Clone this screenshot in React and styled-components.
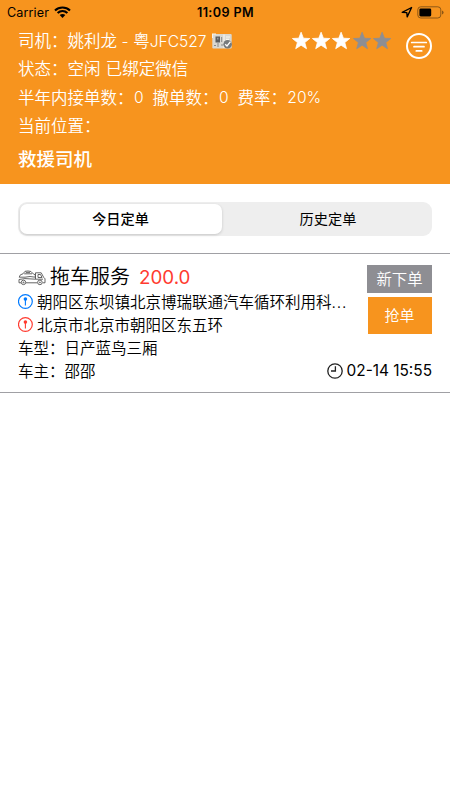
import React from "react";
import styled, { createGlobalStyle } from "styled-components";

const ORANGE = "#f7941e";
const GRAY = "#8e8e93";

const GlobalStyle = createGlobalStyle`
  * { box-sizing: border-box; }
  body { margin: 0; background: #fff; }
  svg { flex: none; }
`;

const Screen = styled.main`
  width: 450px;
  height: 800px;
  overflow: hidden;
  background: #fff;
  color: #000;
  font-family: Inter, "Noto Sans CJK SC", sans-serif;
  white-space: pre;
`;

const Header = styled.header`
  height: 184px;
  background: ${ORANGE};
`;

const StatusBar = styled.div`
  display: grid;
  grid-template-columns: 1fr auto 1fr;
  align-items: center;
  height: 27px;
  padding: 0 6px 3px 7px;
  color: #000;
`;

const Carrier = styled.div`
  display: flex;
  align-items: center;
  gap: 5px;
  font-size: 12.6px;
  letter-spacing: 0.1px;
`;

const Time = styled.div`
  font-size: 12.6px;
  font-weight: 600;
  letter-spacing: 0.4px;
`;

const StatusIcons = styled.div`
  display: flex;
  justify-content: flex-end;
  align-items: center;
  gap: 4px;
`;

const Profile = styled.section`
  display: flex;
  padding: 0 17px 0 18px;
  color: #fff;
`;

const Info = styled.div`
  display: flex;
  flex: 1;
  flex-direction: column;
  min-width: 0;
`;

const InfoLine = styled.div`
  display: flex;
  align-items: center;
  height: 28.3px;
  gap: ${(p) => p.$gap || 0}px;
  font-size: 16.5px;
  font-weight: 350;
  line-height: 28px;
  color: #fff;
`;

const Latin = styled.span`
  font-size: ${(p) => p.$size || 15.6}px;
  font-weight: ${(p) => p.$weight || 350};
  letter-spacing: ${(p) => p.$spacing || 0}px;
  margin-left: ${(p) => p.$indent || 0}px;
`;

const Role = styled.div`
  height: 38px;
  font-size: 18.5px;
  font-weight: 500;
  line-height: 38px;
`;

const Rating = styled.div`
  display: flex;
  flex: none;
  align-items: flex-start;
  padding-top: 4px;
`;

const Stars = styled.div`
  display: flex;
  margin-right: 13px;
`;

const Segments = styled.nav`
  display: grid;
  grid-template-columns: 202px 1fr;
  height: 34px;
  margin: 18px 18px 17px;
  padding: 2px;
  border-radius: 9px;
  background: #eeeeee;
`;

const Segment = styled.div`
  padding-left: ${(p) => (p.$active ? 0 : 4)}px;
  padding-right: ${(p) => (p.$active ? 1 : 0)}px;
  border-radius: 7px;
  text-align: center;
  font-size: 14.2px;
  line-height: 30px;
  font-weight: ${(p) => (p.$active ? 500 : 400)};
  color: #000;
  background: ${(p) => (p.$active ? "#fff" : "transparent")};
  box-shadow: ${(p) => (p.$active ? "0 1px 3px rgba(0, 0, 0, 0.17)" : "none")};
`;

const Order = styled.article`
  display: flex;
  height: 140px;
  padding: 11px 18px 0;
  border-top: 1px solid #a0a0a4;
  border-bottom: 1px solid #a0a0a4;
`;

const Details = styled.div`
  display: flex;
  flex: 1;
  flex-direction: column;
  min-width: 0;
`;

const Title = styled.div`
  display: flex;
  align-items: center;
  height: 25.5px;
  font-size: 20px;
  font-weight: 350;
  line-height: 25px;
`;

const Service = styled.span`
  margin-left: 4px;
`;

const Price = styled.span`
  margin-left: 9px;
  color: #ff3b30;
  font-size: 18.8px;
  font-weight: 400;
`;

const Row = styled.div`
  display: flex;
  align-items: center;
  gap: 4px;
  height: 23.2px;
  font-size: 15.5px;
  font-weight: 350;
  line-height: 23px;
`;

const Side = styled.div`
  display: flex;
  flex: none;
  flex-direction: column;
  align-items: flex-end;
`;

const Badge = styled.div`
  width: 65px;
  height: 28px;
  background: ${GRAY};
  color: #fff;
  font-size: 15.4px;
  font-weight: 350;
  line-height: 29px;
  text-align: center;
`;

const Grab = styled.button`
  width: 64px;
  height: 37px;
  margin: 4px 0 25px;
  padding: 1px 1px 0 0;
  border: 0;
  background: ${ORANGE};
  color: #fff;
  font: 350 15px/36px Inter, "Noto Sans CJK SC", sans-serif;
`;

const DateRow = styled.div`
  display: flex;
  align-items: center;
  gap: 4px;
  height: 23px;
  color: #000;
`;

const Star = ({ filled }) => (
  <svg width="20.25" height="20" viewBox="0 0 20.25 20">
    <path
      d="M10.1 1.2 12.4 7.2 18.8 7.5 13.8 11.5 15.5 17.7 10.1 14.2 4.7 17.7 6.4 11.5 1.4 7.5 7.8 7.2Z"
      fill={filled ? "#fff" : GRAY}
      stroke={filled ? "#fff" : GRAY}
      strokeWidth=".8"
      strokeLinejoin="round"
    />
  </svg>
);

const Wifi = () => (
  <svg width="17" height="12" viewBox="0 0 17 12">
    <path d="M1 4.4C5.1.5 11.9.5 16 4.4M3.6 7.1C6.5 4.4 10.5 4.4 13.4 7.1" fill="none" stroke="#000" strokeWidth="2.1" />
    <path d="M5.7 9.1C7.3 7.6 9.7 7.6 11.3 9.1L8.5 12Z" />
  </svg>
);

const LocationArrow = () => (
  <svg width="12" height="12" viewBox="0 0 12 12">
    <path d="M1.2 6.3 10.6 1.5 6.2 10.9 5.8 6.6Z" fill="none" stroke="#000" strokeWidth="1.35" strokeLinejoin="round" />
  </svg>
);

const Battery = () => (
  <svg width="27" height="13" viewBox="0 0 27 13">
    <rect x=".8" y=".8" width="23" height="11.2" rx="3" fill="none" stroke="#8d5715" />
    <rect x="2.4" y="2.4" width="11.8" height="8" rx="1.3" />
    <path d="M25 4.4Q26.6 4.8 26.6 6.4T25 8.4Z" fill="#8d5715" />
  </svg>
);

const Filter = () => (
  <svg width="28" height="28" viewBox="0 0 28 28" fill="none" stroke="#fff" strokeWidth="2" strokeLinecap="round">
    <circle cx="14" cy="15" r="12" />
    <path d="M6.7 11.5H21.3M9 15.7H19M11.3 19.9H16.7" strokeWidth="1.7" />
  </svg>
);

const License = () => (
  <svg width="21" height="17" viewBox="0 0 21 17">
    <rect x=".3" y="1" width="19.4" height="14.6" rx="1" fill="#d9d8d2" />
    <path d="M.5 5V1H4M12 1.4V15M14 4H18M14 6.4H17" fill="none" stroke="#f7f5ee" strokeWidth="1.2" />
    <rect x="3.5" y="3.5" width="4.5" height="6" fill="#5b5d60" />
    <path d="M5 4.8H6.5V6.5H5Z" fill="#999" />
    <path d="M2 12.5H4M6 10V14M9.7 4V9M9 12H11" stroke="#888" />
    <circle cx="15.6" cy="11.2" r="4.3" fill="#777b7d" />
    <path d="M13.2 11.2 15 13 18.5 8.7" fill="none" stroke="#fff" strokeWidth="1.3" />
  </svg>
);

const TowTruck = () => (
  <svg width="28" height="16" viewBox="0 0 28 16" fill="none" stroke="#555" strokeWidth=".9" strokeLinejoin="round">
    <path d="M1.2 7.2 2.4 4.8 5 3.8 7 1.3Q10 .6 13 1.5L15.4 4 17.3 4.8V7.2L12 6.5 7 7.2ZM6.2 3.8H14M7.8 2.4H12" />
    <path d="M1 9.5 7 8.6 17.5 9.2V2.8H23.2L25.7 7.4 27 8.8V12.8H24.8M19.2 12.8H8M3 12.8H1V9.5M20 4.5H22.5L24 7.5H20ZM17.5 9.2H25" />
    <circle cx="5.5" cy="12.4" r="2.2" />
    <circle cx="21.9" cy="12.4" r="2.3" />
    <circle cx="5.5" cy="12.4" r=".5" />
    <circle cx="21.9" cy="12.4" r=".5" />
  </svg>
);

const Pin = ({ color }) => (
  <svg width="15" height="16" viewBox="0 0 15 16" fill="none" stroke={color}>
    <circle cx="7.4" cy="7.5" r="6.9" strokeWidth="1.2" />
    <circle cx="7.4" cy="5.1" r="1.8" fill={color} stroke="none" />
    <path d="M7.4 6V11.6" strokeWidth="1.1" />
  </svg>
);

const Clock = () => (
  <svg width="16" height="16" viewBox="0 0 16 16" fill="none" stroke="#222" strokeWidth="1.3">
    <circle cx="8" cy="8" r="7.2" />
    <path d="M8.4 3.3V8H4" />
  </svg>
);

export default function App() {
  return (
    <>
      <GlobalStyle />
      <Screen>
        <Header>
          <StatusBar>
            <Carrier><span>Carrier</span><Wifi /></Carrier>
            <Time>11:09 PM</Time>
            <StatusIcons><LocationArrow /><Battery /></StatusIcons>
          </StatusBar>
          <Profile>
            <Info>
              <InfoLine $gap={5}>
                <span>司机：姚利龙<Latin $spacing={0.1}> - </Latin>粤<Latin>JFC527</Latin></span>
                <License />
              </InfoLine>
              <InfoLine>状态：空闲<Latin $spacing={0.8}> </Latin>已绑定微信</InfoLine>
              <InfoLine>
                半年内接单数：<Latin $indent={0.6}>0</Latin><Latin>  </Latin>撤单数：<Latin $indent={0.6}>0</Latin><Latin>  </Latin>费率：<Latin $indent={0.3}>20%</Latin>
              </InfoLine>
              <InfoLine>当前位置：</InfoLine>
              <Role>救援司机</Role>
            </Info>
            <Rating>
              <Stars>
                {[true, true, true, false, false].map((filled, i) => <Star key={i} filled={filled} />)}
              </Stars>
              <Filter />
            </Rating>
          </Profile>
        </Header>
        <Segments>
          <Segment $active>今日定单</Segment>
          <Segment>历史定单</Segment>
        </Segments>
        <Order>
          <Details>
            <Title>
              <TowTruck />
              <Service>拖车服务</Service>
              <Price>200.0</Price>
            </Title>
            <Row><Pin color="#007aff" /><span>朝阳区东坝镇北京博瑞联通汽车循环利用科<Latin $spacing={0.8}>...</Latin></span></Row>
            <Row><Pin color="#ff3b30" />北京市北京市朝阳区东五环</Row>
            <Row>车型：日产蓝鸟三厢</Row>
            <Row>车主：邵邵</Row>
          </Details>
          <Side>
            <Badge>新下单</Badge>
            <Grab>抢单</Grab>
            <DateRow><Clock /><Latin $size={15.4} $weight={400}>02-14 15:55</Latin></DateRow>
          </Side>
        </Order>
      </Screen>
    </>
  );
}
